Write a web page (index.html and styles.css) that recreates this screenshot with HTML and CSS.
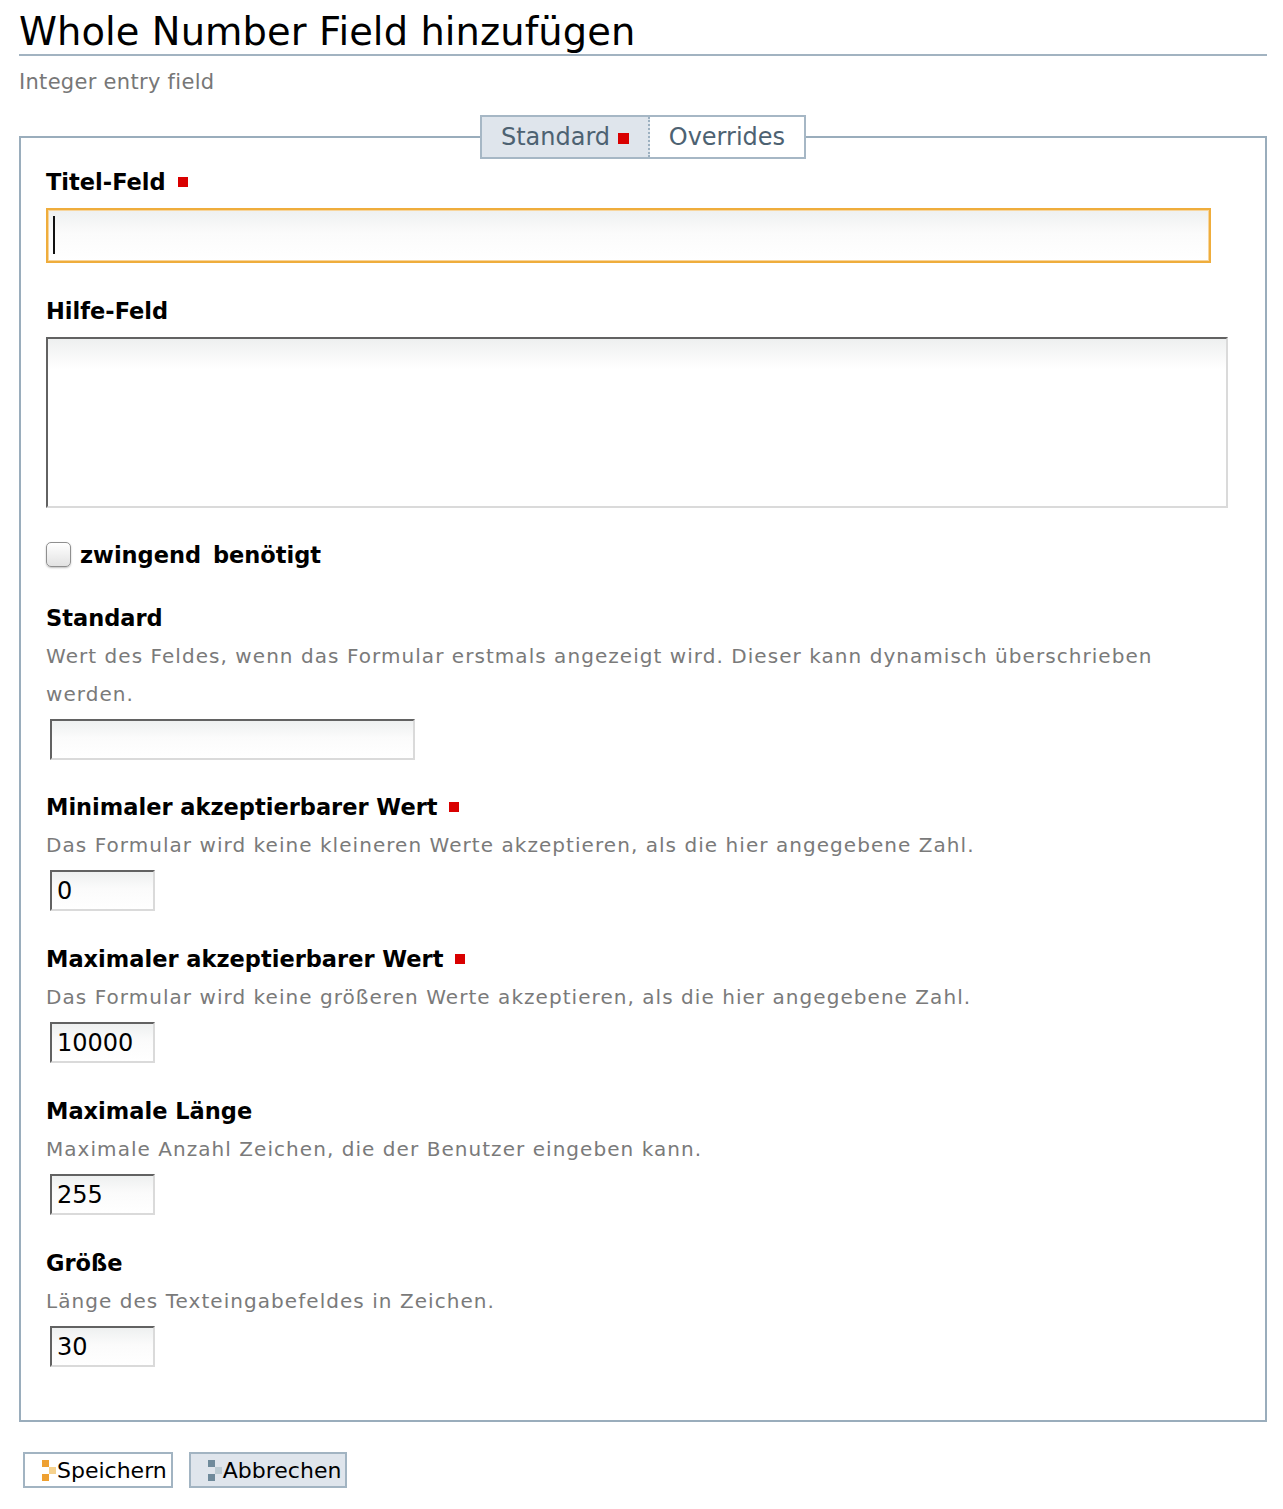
FILE: index.html
```html
<!DOCTYPE html>
<html lang="de">
<head>
<meta charset="utf-8">
<title>Whole Number Field hinzufügen</title>
<link rel="stylesheet" href="styles.css">
</head>
<body>
<h1 class="page-title">Whole Number Field hinzufügen</h1>
<p class="page-sub">Integer entry field</p>

<form class="edit-form">
  <fieldset class="panel">
    <legend class="tabs">
      <span class="tab tab-active">Standard <span class="req req-tab"></span></span><span class="tab">Overrides</span>
    </legend>

    <div class="field">
      <label class="lbl lbl-tight" for="f-title">Titel-Feld <span class="req"></span></label>
      <div class="focus-wrap">
        <input type="text" id="f-title" class="inp inp-title">
        <span class="caret"></span>
      </div>
    </div>

    <div class="field">
      <label class="lbl lbl-tight" for="f-help">Hilfe-Feld</label>
      <textarea id="f-help" class="inp inp-area"></textarea>
    </div>

    <div class="field check-row">
      <span class="checkbox"></span>
      <span class="check-lbl">zwingend benötigt</span>
    </div>

    <div class="field field-std">
      <label class="lbl">Standard</label>
      <p class="hint">Wert des Feldes, wenn das Formular erstmals angezeigt wird. Dieser kann dynamisch überschrieben werden.</p>
      <input type="text" class="inp inp-mid">
    </div>

    <div class="field">
      <label class="lbl">Minimaler akzeptierbarer Wert <span class="req"></span></label>
      <p class="hint">Das Formular wird keine kleineren Werte akzeptieren, als die hier angegebene Zahl.</p>
      <input type="text" class="inp inp-small" value="0">
    </div>

    <div class="field">
      <label class="lbl">Maximaler akzeptierbarer Wert <span class="req"></span></label>
      <p class="hint">Das Formular wird keine größeren Werte akzeptieren, als die hier angegebene Zahl.</p>
      <input type="text" class="inp inp-small" value="10000">
    </div>

    <div class="field">
      <label class="lbl">Maximale Länge</label>
      <p class="hint">Maximale Anzahl Zeichen, die der Benutzer eingeben kann.</p>
      <input type="text" class="inp inp-small" value="255">
    </div>

    <div class="field field-last">
      <label class="lbl">Größe</label>
      <p class="hint">Länge des Texteingabefeldes in Zeichen.</p>
      <input type="text" class="inp inp-small" value="30">
    </div>
  </fieldset>

  <div class="actions">
    <button type="button" class="btn btn-save"><span class="ico ico-save"><i></i><i></i><i></i></span>Speichern</button>
    <button type="button" class="btn btn-cancel"><span class="ico ico-cancel"><i></i><i></i><i></i></span>Abbrechen</button>
  </div>
</form>
</body>
</html>
```

FILE: styles.css
```css
html, body {
  margin: 0;
  background: #fff;
}

body {
  padding: 0 16px 0 19px;
  font-family: "DejaVu Sans", "Liberation Sans", sans-serif;
  color: #000;
}

.page-title {
  margin: 0;
  padding-top: 10px;
  font-size: 38.4px;
  font-weight: normal;
  line-height: 44px;
  letter-spacing: 0.1px;
  border-bottom: 2px solid #a2b3c1;
}

.page-sub {
  margin: 13px 0 0;
  font-size: 21px;
  line-height: 26px;
  color: #777;
  letter-spacing: 0.3px;
}

.panel {
  margin: 20px 0 0;
  padding: 8px 25px 53px 25px;
  border: 2px solid #9aadbc;
  min-width: 0;
}

.tabs {
  margin: 0 auto;
  padding: 0;
  display: flex;
  border: 2px solid #a6b7c5;
  background: #fff;
}

.tab {
  display: block;
  height: 40px;
  line-height: 40px;
  font-size: 24px;
  color: #4d6272;
  padding: 0 19px 0 19px;
}

.tab-active {
  background: #dfe5ec;
  border-right: 2px dotted #9cb0c0;
  padding: 0 19px 0 19px;
}

.req {
  display: inline-block;
  width: 10px;
  height: 10px;
  background: #d90000;
  margin-left: 4px;
  vertical-align: 3px;
}

.req-tab {
  width: 11px;
  height: 11px;
  margin-left: 0;
  vertical-align: 1px;
}

.field {
  margin-bottom: 33px;
}

.field-std {
  margin-bottom: 32px;
}

.field-last {
  margin-bottom: 0;
}

.lbl {
  display: block;
  font-size: 22.5px;
  font-weight: bold;
  line-height: 30px;
  margin-bottom: 4px;
}

.lbl-tight {
  margin-bottom: 11px;
}

.hint {
  margin: 0;
  font-size: 20px;
  line-height: 38px;
  color: #7a7a7a;
  letter-spacing: 1.05px;
  max-width: 1180px;
}

.inp {
  display: block;
  box-sizing: border-box;
  font-family: "DejaVu Sans", "Liberation Sans", sans-serif;
  font-size: 24px;
  color: #000;
  margin: 0;
  padding: 0 5px;
  border-style: solid;
  border-width: 2px;
  border-color: #626262 #dadada #dadada #626262;
  background: linear-gradient(#eef0f0, #fbfbfb 45%, #fff);
  outline: none;
  border-radius: 0;
}

/* focused title input with its text cursor */
.focus-wrap {
  position: relative;
  width: 1165px;
}

.caret {
  position: absolute;
  left: 7px;
  top: 8px;
  width: 2px;
  height: 38px;
  background: #111;
}

.inp-title {
  width: 1165px;
  height: 55px;
  border-color: #efad3c;
  box-shadow: inset 0 0 0 1px #f7d59c;
}

.inp-area {
  width: 1182px;
  height: 171px;
  resize: none;
  background: linear-gradient(#eef0f0, #fff 30px, #fff);
}

.inp-mid {
  width: 365px;
  height: 41px;
  margin: 6px 0 0 4px;
}

.inp-small {
  width: 105px;
  height: 41px;
  margin: 6px 0 0 4px;
  line-height: 37px;
}

.check-row {
  display: flex;
  align-items: center;
  gap: 9px;
  margin-top: 34px;
  margin-bottom: 36px;
  height: 25px;
}

.checkbox {
  width: 23px;
  height: 23px;
  border: 1px solid #8f8f8f;
  border-radius: 5px;
  background: linear-gradient(#ffffff, #e2e2e2);
  box-shadow: 0 1px 2px rgba(0, 0, 0, 0.25);
}

.check-lbl {
  font-size: 22.5px;
  font-weight: bold;
  word-spacing: 4px;
}

.actions {
  display: flex;
  gap: 16px;
  margin-top: 30px;
  padding-left: 4px;
}

.btn {
  display: flex;
  align-items: center;
  height: 36px;
  box-sizing: border-box;
  border: 2px solid #a2b4c2;
  background: #fff;
  font-family: "DejaVu Sans", "Liberation Sans", sans-serif;
  font-size: 22px;
  color: #000;
  padding: 0 4px 0 17px;
  margin: 0;
  border-radius: 0;
}

.btn-cancel {
  background: #dfe5ec;
}

.ico {
  display: grid;
  grid-template-columns: 7px 7px;
  grid-template-rows: 7px 7px 7px;
  margin-right: 1px;
}

.ico i:nth-child(1) { grid-column: 1; grid-row: 1; }
.ico i:nth-child(2) { grid-column: 2; grid-row: 2; }
.ico i:nth-child(3) { grid-column: 1; grid-row: 3; }

.ico-save i { background: #eea031; }
.ico-save i:nth-child(2) { background: #f6d28d; }

.ico-cancel i { background: #6f8a9b; }
.ico-cancel i:nth-child(2) { background: #bccbd3; }
```
